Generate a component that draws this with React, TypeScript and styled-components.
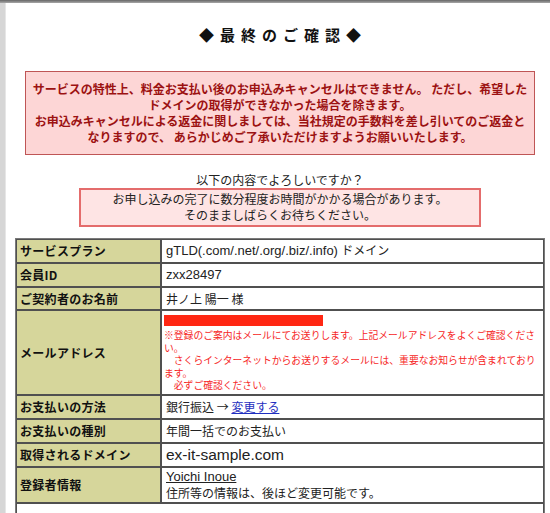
import React from "react";
import styled, { createGlobalStyle } from "styled-components";

const Global = createGlobalStyle`
  html, body { margin: 0; padding: 0; background: #ffffff; }
  body {
    font-family: "Liberation Sans", "Noto Sans CJK JP", sans-serif;
    color: #222;
  }
`;

const JP = `"Noto Sans CJK JP", sans-serif`;

const Page = styled.div`
  display: flex;
  flex-direction: column;
  width: 550px;
  height: 513px;
  overflow: hidden;
`;

const TopBar = styled.div`
  height: 3px;
  flex: none;
  background: linear-gradient(#666666, #a8a8a8);
`;

const Body = styled.div`
  flex: 1;
  display: flex;
`;

const SideStrip = styled.div`
  width: 5px;
  flex: none;
  background: #d6d6d6;
  border-right: 1px solid #e6e6e6;
`;

const Main = styled.main`
  flex: 1;
  display: flex;
  flex-direction: column;
  padding: 0 5px 0 9px;
`;

const Title = styled.h1`
  margin: 22px 0 0;
  padding-left: 6px;
  font-family: ${JP};
  font-size: 15px;
  line-height: 20px;
  font-weight: 700;
  letter-spacing: 6px;
  text-align: center;
  color: #111;
`;

const WarningBox = styled.div`
  margin: 26px 10px 0;
  padding: 9px 0;
  background: #fdd6d6;
  border: 1px solid #bf5555;
  color: #9c1212;
  font-family: ${JP};
  font-size: 12px;
  line-height: 16px;
  font-weight: 700;
  text-align: center;
  white-space: nowrap;
`;

const Question = styled.p`
  margin: 17px 0 0;
  font-family: ${JP};
  font-size: 12px;
  line-height: 16px;
  text-align: center;
  color: #222;
`;

const NoticeBox = styled.div`
  width: 398px;
  margin: 0 auto;
  padding: 1px 0 2px;
  background: #fee4e4;
  border: 2px solid #e46c6c;
  font-family: ${JP};
  font-size: 12px;
  line-height: 16px;
  text-align: center;
  color: #222;
`;

const Table = styled.table`
  margin-top: 11px;
  width: 100%;
  table-layout: fixed;
  border-collapse: separate;
  border-spacing: 0;
  border: 1px solid #7a7a7a;
`;

const LabelCol = styled.col`
  width: 145px;
`;

const Row = styled.tr<{ $h?: number }>`
  height: ${(p) => p.$h ?? 24}px;
`;

const LabelCell = styled.th`
  padding: 0 4px 0 3px;
  border: 1px solid #505050;
  background: #d6d69b;
  color: #111;
  font-family: ${JP};
  font-size: 12px;
  line-height: 18px;
  font-weight: 700;
  letter-spacing: 0.3px;
  text-align: left;
  vertical-align: middle;
  white-space: nowrap;
`;

const ValueCell = styled.td<{ $big?: boolean; $jp?: boolean }>`
  padding: 0 4px;
  border: 1px solid #505050;
  background: #ffffff;
  color: #222;
  font-family: ${(p) => (p.$jp ? JP : `"Liberation Sans", "Noto Sans CJK JP", sans-serif`)};
  font-size: ${(p) => (p.$big ? "15.5px" : "12px")};
  line-height: 18px;
  text-align: left;
  vertical-align: middle;
`;

const Latin = styled.span`
  font-family: "Liberation Sans", sans-serif;
  font-size: 13px;
`;

const Arrow = styled.span`
  font-family: ${JP};
  font-size: 12px;
`;

const MailCell = styled.td`
  padding: 4px 4px 0 2px;
  border: 1px solid #505050;
  background: #ffffff;
  vertical-align: top;
`;

const Redacted = styled.div`
  width: 159px;
  height: 11px;
  background: #ff2713;
`;

const MailNote = styled.div`
  margin-top: 3px;
  color: #f62626;
  font-family: ${JP};
  font-size: 9.8px;
  line-height: 12.5px;
  white-space: nowrap;
`;

const Link = styled.a<{ $plain?: boolean }>`
  color: ${(p) => (p.$plain ? "#222" : "#1f2fc0")};
  text-decoration: underline;
  cursor: pointer;
`;

const SubLine = styled.div<{ $jp?: boolean }>`
  font-family: ${(p) => (p.$jp ? JP : `"Liberation Sans", sans-serif`)};
  line-height: 16px;
`;

const FillCell = styled.td`
  border: 1px solid #505050;
  background: #ffffff;
`;

const Indent = () => <>{"\u3000"}</>;

export default function App() {
  return (
    <>
      <Global />
      <Page>
        <TopBar />
        <Body>
          <SideStrip />
          <Main>
            <Title>◆最終のご確認◆</Title>
            <WarningBox>
              サービスの特性上、料金お支払い後のお申込みキャンセルはできません。 ただし、希望した
              <br />
              ドメインの取得ができなかった場合を除きます。
              <br />
              お申込みキャンセルによる返金に関しましては、当社規定の手数料を差し引いてのご返金と
              <br />
              なりますので、 あらかじめご了承いただけますようお願いいたします。
            </WarningBox>
            <Question>以下の内容でよろしいですか？</Question>
            <NoticeBox>
              お申し込みの完了に数分程度お時間がかかる場合があります。
              <br />
              そのまましばらくお待ちください。
            </NoticeBox>
            <Table>
              <colgroup>
                <LabelCol />
                <col />
              </colgroup>
              <tbody>
                <Row>
                  <LabelCell>サービスプラン</LabelCell>
                  <ValueCell>
                    <Latin>gTLD(.com/.net/.org/.biz/.info)</Latin> ドメイン
                  </ValueCell>
                </Row>
                <Row>
                  <LabelCell>会員ID</LabelCell>
                  <ValueCell>
                    <Latin>zxx28497</Latin>
                  </ValueCell>
                </Row>
                <Row $h={23}>
                  <LabelCell>ご契約者のお名前</LabelCell>
                  <ValueCell $jp>井ノ上 陽一 様</ValueCell>
                </Row>
                <Row $h={85}>
                  <LabelCell>メールアドレス</LabelCell>
                  <MailCell>
                    <Redacted />
                    <MailNote>
                      ※登録のご案内はメールにてお送りします。上記メールアドレスをよくご確認くださ
                      <br />
                      い。
                      <br />
                      <Indent />
                      さくらインターネットからお送りするメールには、重要なお知らせが含まれており
                      <br />
                      ます。
                      <br />
                      <Indent />
                      必ずご確認ください。
                    </MailNote>
                  </MailCell>
                </Row>
                <Row>
                  <LabelCell>お支払いの方法</LabelCell>
                  <ValueCell $jp>
                    銀行振込 <Arrow>→</Arrow> <Link>変更する</Link>
                  </ValueCell>
                </Row>
                <Row>
                  <LabelCell>お支払いの種別</LabelCell>
                  <ValueCell $jp>年間一括でのお支払い</ValueCell>
                </Row>
                <Row>
                  <LabelCell>取得されるドメイン</LabelCell>
                  <ValueCell $big>ex-it-sample.com</ValueCell>
                </Row>
                <Row $h={36}>
                  <LabelCell>登録者情報</LabelCell>
                  <ValueCell>
                    <SubLine>
                      <Link $plain>
                        <Latin>Yoichi Inoue</Latin>
                      </Link>
                    </SubLine>
                    <SubLine $jp>住所等の情報は、後ほど変更可能です。</SubLine>
                  </ValueCell>
                </Row>
                <Row $h={20}>
                  <FillCell colSpan={2} />
                </Row>
              </tbody>
            </Table>
          </Main>
        </Body>
      </Page>
    </>
  );
}
